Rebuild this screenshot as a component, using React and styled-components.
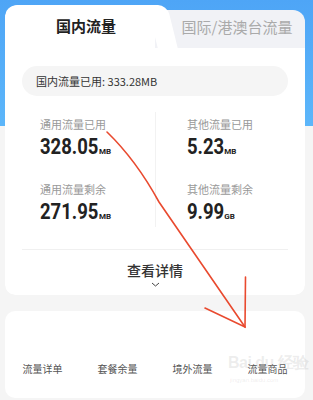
import React from 'react';
import styled, { createGlobalStyle } from 'styled-components';

const GlobalStyle = createGlobalStyle`
  html, body {
    margin: 0;
    padding: 0;
  }
  body {
    width: 313px;
    height: 400px;
    overflow: hidden;
    font-family: "Noto Sans CJK SC", "Noto Sans", sans-serif;
    background: linear-gradient(180deg, #4ea5f6 0px, #5cb6fa 126px, #f5f5f5 126px, #f5f5f5 100%);
  }
`;

const Page = styled.div`
  position: relative;
  width: 313px;
  height: 400px;
  padding: 5px 8px 0 5px;
  box-sizing: border-box;
  display: flex;
  flex-direction: column;
  gap: 16px;
`;

const Card = styled.div`
  width: 300px;
  border-radius: 10px;
  background: ${props => (props.plain ? '#fff' : 'transparent')};
  overflow: hidden;
`;

const TabRow = styled.div`
  display: flex;
  height: 43px;
`;

const ActiveTab = styled.div`
  position: relative;
  z-index: 1;
  width: 138px;
  background: #fff;
  border-top-left-radius: 12px;
  display: flex;
  align-items: center;
  justify-content: center;
  padding-left: 12px;
  padding-bottom: 2px;
  font-size: 15px;
  font-weight: 700;
  color: #222;

  &::after {
    content: '';
    position: absolute;
    top: 0;
    right: -12px;
    width: 20px;
    height: 100%;
    background: #fff;
    border-top-right-radius: 9px;
    transform: skewX(14deg);
    transform-origin: top;
  }
`;

const InactiveTab = styled.div`
  flex: 1;
  margin-top: 5px;
  background: #f1f2f6;
  border-top-right-radius: 12px;
  display: flex;
  align-items: center;
  justify-content: center;
  padding-left: 14px;
  padding-bottom: 6px;
  font-size: 15px;
  color: #aaa;
`;

const Body = styled.div`
  background: #fff;
  padding: 18px 17px 0;
  border-radius: 0 0 10px 10px;
`;

const Pill = styled.div`
  height: 30px;
  border-radius: 15px;
  background: #f5f5f5;
  display: flex;
  align-items: center;
  padding-left: 14px;
  font-size: 11px;
  color: #333;
`;

const StatGrid = styled.div`
  display: grid;
  grid-template-columns: 133px 1fr;
  margin-top: 20px;
  padding-bottom: 22px;
  border-bottom: 1px solid #f0f0f0;
`;

const Stat = styled.div`
  height: ${props => (props.last ? '46px' : '65px')};
  padding-left: ${props => (props.right ? '31px' : '18px')};
  padding-top: ${props => (props.last ? '0' : '4px')};
  margin-top: ${props => (props.last ? '0' : '-4px')};
  border-left: ${props => (props.right ? '1px solid #f2f2f2' : 'none')};
`;

const Label = styled.div`
  font-size: 11px;
  line-height: 16px;
  color: #999;
`;

const Value = styled.div`
  margin-top: 3px;
  font-family: "Roboto", "Liberation Sans", sans-serif;
  font-weight: 700;
  color: #222;
  line-height: 24px;
  white-space: nowrap;
`;

const Number = styled.span`
  display: inline-block;
  font-size: 22px;
  transform: scaleX(0.84);
  transform-origin: left;
  margin-right: ${props => -props.len * 1.75}px;
`;

const Unit = styled.span`
  font-size: 8px;
  font-weight: 700;
`;

const Details = styled.div`
  display: flex;
  flex-direction: column;
  align-items: center;
  padding: 10px 0 8px;
  font-size: 14px;
  font-weight: 500;
  color: #333;
  line-height: 20px;
`;

const Chevron = styled.svg`
  margin-top: 2px;
`;

const ShortcutRow = styled.div`
  display: grid;
  grid-template-columns: repeat(4, 1fr);
  padding: 50px 0 21px;
`;

const Shortcut = styled.div`
  text-align: center;
  font-size: 10px;
  line-height: 16px;
  color: #555;
`;

const Arrow = styled.svg`
  position: absolute;
  left: 0;
  top: 0;
  pointer-events: none;
`;

const Watermark = styled.div`
  position: absolute;
  left: 228px;
  top: 355px;
  color: rgba(160, 160, 160, 0.2);
  font-family: "Liberation Sans", sans-serif;
  font-weight: 700;
  line-height: 1;
  white-space: nowrap;
  pointer-events: none;
`;

const WatermarkBig = styled.div`
  font-size: 16px;
  letter-spacing: -0.5px;
`;

const WatermarkSmall = styled.div`
  font-size: 6px;
  font-weight: 400;
  margin-top: 6px;
  padding-left: 2px;
`;

const stats = [
  { label: '通用流量已用', value: '328.05', unit: 'MB' },
  { label: '其他流量已用', value: '5.23', unit: 'MB', right: true },
  { label: '通用流量剩余', value: '271.95', unit: 'MB', last: true },
  { label: '其他流量剩余', value: '9.99', unit: 'GB', right: true, last: true },
];

const shortcuts = ['流量详单', '套餐余量', '境外流量', '流量商品'];

const App = () => {
  return (
    <>
      <GlobalStyle />
      <Page>
        <Card>
          <TabRow>
            <ActiveTab>国内流量</ActiveTab>
            <InactiveTab>国际/港澳台流量</InactiveTab>
          </TabRow>
          <Body>
            <Pill>国内流量已用: 333.28MB</Pill>
            <StatGrid>
              {stats.map(s => (
                <Stat key={s.label} right={s.right} last={s.last}>
                  <Label>{s.label}</Label>
                  <Value>
                    <Number len={s.value.length}>{s.value}</Number>
                    <Unit>{s.unit}</Unit>
                  </Value>
                </Stat>
              ))}
            </StatGrid>
            <Details>
              查看详情
              <Chevron width="9" height="5" viewBox="0 0 9 5">
                <path d="M1 1 L4.5 4 L8 1" fill="none" stroke="#444" strokeWidth="1" />
              </Chevron>
            </Details>
          </Body>
        </Card>
        <Card plain>
          <ShortcutRow>
            {shortcuts.map(s => (
              <Shortcut key={s}>{s}</Shortcut>
            ))}
          </ShortcutRow>
        </Card>
        <Watermark>
          <WatermarkBig>Bai du 经验</WatermarkBig>
          <WatermarkSmall>jingyan.baidu.com</WatermarkSmall>
        </Watermark>
        <Arrow width="313" height="400" viewBox="0 0 313 400">
          <g fill="none" stroke="#e94a2f" strokeWidth="1.6" strokeLinecap="round">
            <path d="M107 132 Q 136 160 159 202 L 245 327" />
            <path d="M205 308 L 245 327 L 245.5 277" />
          </g>
        </Arrow>
      </Page>
    </>
  );
};

export default App;
